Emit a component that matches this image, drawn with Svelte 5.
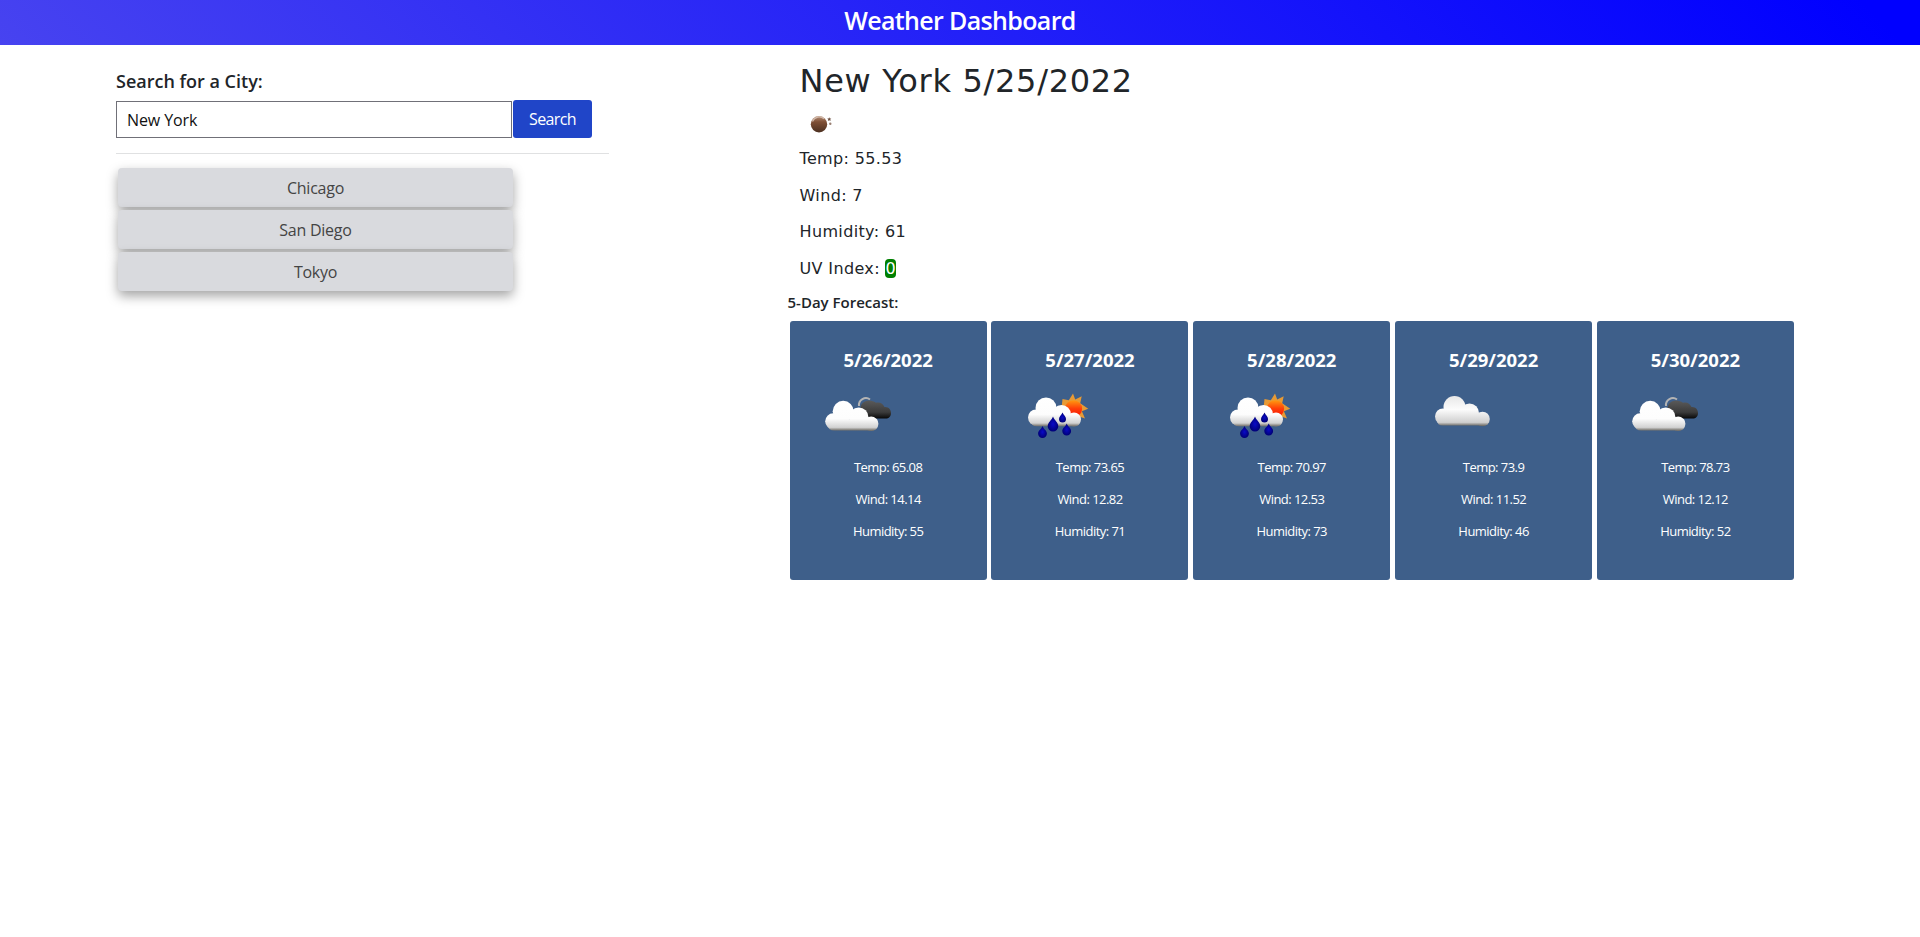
<script>
  const cities = ['Chicago', 'San Diego', 'Tokyo'];
  const days = [
    { date: '5/26/2022', icon: 'broken', temp: '65.08', wind: '14.14', humidity: 55 },
    { date: '5/27/2022', icon: 'rain', temp: '73.65', wind: '12.82', humidity: 71 },
    { date: '5/28/2022', icon: 'rain', temp: '70.97', wind: '12.53', humidity: 73 },
    { date: '5/29/2022', icon: 'cloud', temp: '73.9', wind: '11.52', humidity: 46 },
    { date: '5/30/2022', icon: 'broken', temp: '78.73', wind: '12.12', humidity: 52 }
  ];
  let city = $state('New York');
</script>

<svg class="defs" width="0" height="0" aria-hidden="true">
  <defs>
    <linearGradient id="white" gradientUnits="userSpaceOnUse" x1="0" y1="17" x2="0" y2="46">
      <stop offset="0" stop-color="#fff" /><stop offset=".6" stop-color="#fdfdfd" /><stop offset=".9" stop-color="#d2d2d2" /><stop offset="1" stop-color="#77746e" />
    </linearGradient>
    <linearGradient id="grey" gradientUnits="userSpaceOnUse" x1="0" y1="16" x2="0" y2="46">
      <stop offset="0" stop-color="#e8e8e8" /><stop offset=".45" stop-color="#fcfcfc" /><stop offset=".88" stop-color="#cfcfcf" /><stop offset="1" stop-color="#66645f" />
    </linearGradient>
    <linearGradient id="dark" x1="0" y1="0" x2="0" y2="1">
      <stop offset="0" stop-color="#5a5a5a" /><stop offset=".65" stop-color="#3b3b3b" /><stop offset="1" stop-color="#080808" />
    </linearGradient>
    <linearGradient id="sun" x1="0" y1="0" x2="0" y2="1">
      <stop offset="0" stop-color="#ff9a10" /><stop offset=".5" stop-color="#ff3c08" /><stop offset="1" stop-color="#f51505" />
    </linearGradient>
    <linearGradient id="moon" x1="0" y1="0" x2="0" y2="1">
      <stop offset="0" stop-color="#b58f78" /><stop offset=".35" stop-color="#805036" /><stop offset="1" stop-color="#4b2f20" />
    </linearGradient>
    <radialGradient id="drop"><stop offset="0" stop-color="#0a0ac8" /><stop offset="1" stop-color="#000078" /></radialGradient>
  </defs>
</svg>

<header><h1>Weather Dashboard</h1></header>
<main>
  <aside>
    <label for="city">Search for a City:</label>
    <div class="search">
      <input id="city" bind:value={city} />
      <button class="go">Search</button>
    </div>
    <hr />
    <div class="history">
      {#each cities as name}<button>{name}</button>{/each}
    </div>
  </aside>
  <section>
    <div class="current">
      <h2>New York 5/25/2022</h2>
      <svg class="now" width="50" height="35" viewBox="0 0 50 35">
        <circle cx="18" cy="17.300" r="8.200" fill="url(#moon)" />
        <path d="M11.500 14.500a7.300 7.300 0 0 1 11.500-2.800" fill="none" stroke="#e2d0c6" stroke-width="1.300" opacity=".75" />
        <path d="m28.200 10.200.7 1.300 1.400.1-1 1 .3 1.400-1.400-.7-1.300.7.3-1.400-1-1 1.400-.1Z" fill="#6e5143" />
        <circle cx="29.300" cy="16.800" r="1.200" fill="#9a8073" />
      </svg>
      <p>Temp: 55.53</p>
      <p>Wind: 7</p>
      <p>Humidity: 61</p>
      <p>UV Index: <span class="uv">0</span></p>
    </div>
    <h3>5-Day Forecast:</h3>
    <div class="cards">
      {#each days as d}
        <article>
          <h4>{d.date}</h4>
          <svg width="120" height="70" viewBox="0 0 120 70">
            {#if d.icon === 'broken'}
              <path d="M59 26a7 7 0 0 1 11-6.500" fill="none" stroke="#b4b4b4" stroke-width="2" />
              <path d="M60.500 30c-.5-6 3.500-9.500 8.500-9.500 3 0 5 1 7 2.200 4-1 7 .8 8.500 4.300 4-.5 6.500 2.500 6.500 6S89 38.500 85.500 38.500H70Z" fill="url(#dark)" />
              <g fill="url(#white)" transform="translate(-1.800 4.300)">
                <circle cx="35" cy="37" r="8" /><circle cx="45" cy="27" r="10.500" /><circle cx="60.500" cy="33" r="9.800" /><circle cx="73" cy="39.500" r="7.200" />
                <path d="M30 35h49v6q0 5.300-6 5.300H36q-6 0-6-5.300Z" />
              </g>
            {:else if d.icon === 'rain'}
              <path d="m72 13.500 2.200 6 6.500-3.200-1.500 7 8 5.500-6.300 2.500 3.100 7.200-7.300-2.500L70 39l-9.500-10.500 1-9.500 6.300 1.300Z" fill="#e79a35" />
              <circle cx="72.500" cy="28.800" r="8.600" fill="url(#sun)" />
              <g fill="url(#white)">
                <circle cx="35" cy="37.500" r="8" /><circle cx="45" cy="28" r="10.500" /><circle cx="60.500" cy="34.500" r="9.500" /><circle cx="73" cy="39.500" r="7" />
                <path d="M30 36h49v5q0 5.300-6 5.300H36q-6 0-6-5.300Z" />
              </g>
              <g fill="url(#drop)">
                <path d="M52 36.500c1.500 4 5.300 6 5.300 9.700a5.300 5.300 0 0 1-10.600 0c0-3.700 3.800-5.700 5.300-9.700Z" />
                <path d="M61.500 32.500c1 2.500 3.500 4 3.500 6.400a3.500 3.500 0 0 1-7 0c0-2.400 2.500-3.900 3.500-6.400Z" />
                <path d="M41.500 46c1 3 4.400 4.500 4.400 7.600a4.400 4.400 0 0 1-8.800 0c0-3.100 3.400-4.600 4.400-7.600Z" />
                <path d="M65.700 43.500c1 3 4.400 4.500 4.400 7.600a4.400 4.400 0 0 1-8.800 0c0-3.100 3.400-4.600 4.400-7.600Z" />
              </g>
            {:else}
              <g fill="url(#grey)">
                <circle cx="38" cy="36.500" r="8" /><circle cx="49.500" cy="27" r="11" /><circle cx="64.500" cy="33" r="9.500" /><circle cx="77.500" cy="39" r="7.300" />
                <path d="M32 36h52v4q0 5.500-6 5.500H38q-6 0-6-5.500Z" />
              </g>
            {/if}
          </svg>
          <p>Temp: {d.temp}</p>
          <p>Wind: {d.wind}</p>
          <p>Humidity: {d.humidity}</p>
        </article>
      {/each}
    </div>
  </section>
</main>

<style>
  :global(body) { margin: 0; background: #fff; color: #212529; font-family: "Open Sans", "Noto Sans", sans-serif; }
  * { box-sizing: border-box; }
  h1, h2, h3, h4, p { margin: 0; }
  .defs { position: absolute; }
  header { height: 45px; background: linear-gradient(45deg, #4743f0, #00f 97%); color: #fff; text-align: center; }
  h1 { font-size: 25px; line-height: 41px; font-weight: 600; letter-spacing: -.65px; }
  main { display: flex; padding-left: 116px; gap: 178.500px; }
  aside { width: 493px; padding-top: 23px; }
  label { display: block; font-size: 18px; line-height: 26px; height: 32px; font-weight: 600; }
  .search { display: flex; gap: 1px; }
  input { width: 396px; height: 37px; margin-top: 1px; padding: 0 10px; border: 1px solid #707078; font: 16px "Open Sans", sans-serif; letter-spacing: -.1px; color: #111; }
  button { border: 0; padding: 0; font: 16px "Open Sans", sans-serif; letter-spacing: -.25px; }
  .go { width: 79px; height: 38px; border-radius: 3px; background: #2045c8; color: #fff; letter-spacing: -.6px; }
  hr { height: 1px; margin: 15px 0 14px; border: 0; background: #e0e1e2; }
  .history { display: flex; flex-direction: column; gap: 3px; padding-left: 2px; }
  .history button { width: 395px; height: 39px; border-radius: 4px; background: #d9dade; color: #444; box-shadow: 0 5px 12px rgba(0,0,0,.36); }
  section { padding-top: 16px; }
  .current { padding-left: 12px; font-family: "DejaVu Sans", sans-serif; }
  h2 { font-size: 32px; line-height: 40px; height: 40px; font-weight: 400; letter-spacing: .7px; }
  .now { display: block; margin: 6px 0 3px 1px; }
  .current p { font-size: 16px; height: 36.600px; line-height: 28px; letter-spacing: .36px; }
  .uv { display: inline-block; height: 19px; line-height: 19px; background: green; color: #fff; border-radius: 4px; letter-spacing: 0; }
  h3 { font-size: 15px; line-height: 23px; height: 30px; font-weight: 600; }
  .cards { display: flex; gap: 4.800px; padding-left: 2.200px; }
  article { width: 197px; height: 259px; border-radius: 3px; background: #3e5f8a; color: #fff; text-align: center; padding-top: 25px; }
  h4 { font-size: 18.500px; line-height: 28px; font-weight: 700; }
  article svg { display: block; margin: 6px 0 3px 10px; }
  article p { font-size: 13px; line-height: 28px; height: 32px; letter-spacing: -.54px; }
</style>
